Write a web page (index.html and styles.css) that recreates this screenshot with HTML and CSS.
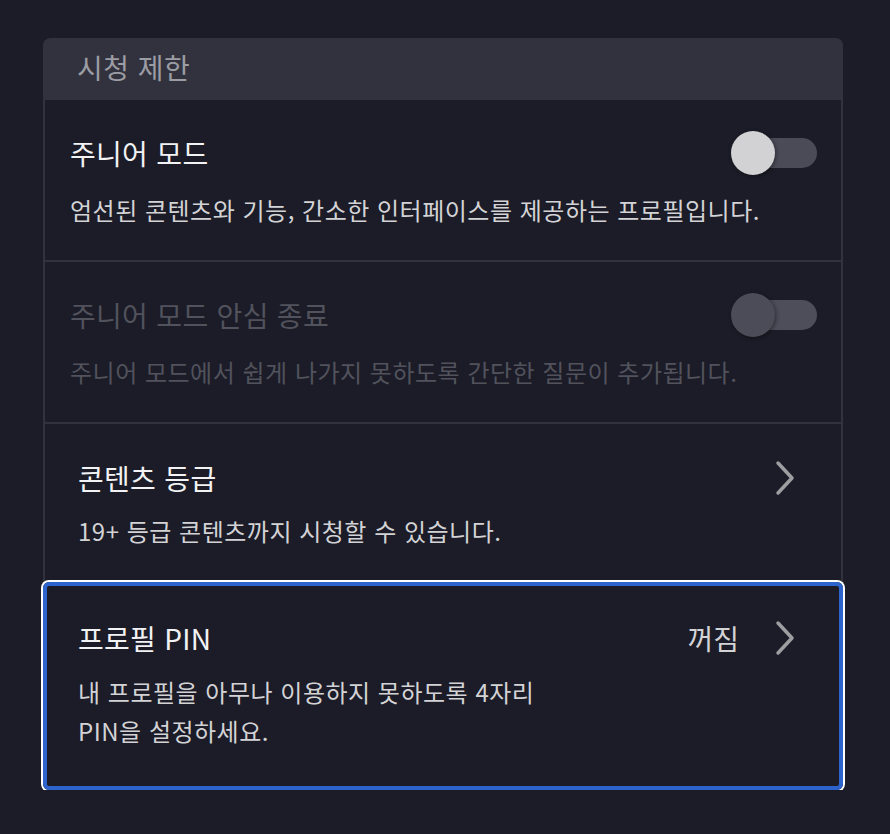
FILE: index.html
```html
<!DOCTYPE html>
<html lang="ko">
<head>
    <meta charset="UTF-8">
    <meta name="viewport" content="width=device-width, initial-scale=1.0">
    <title>시청 제한</title>
    <link rel="stylesheet" href="styles.css">
</head>
<body>
    <section class="panel">
        <div class="panel-header">시청 제한</div>

        <div class="row toggle-row">
            <div class="row-main">
                <div class="row-title">주니어 모드</div>
                <span class="switch"><span class="switch-track"></span><span class="switch-knob"></span></span>
            </div>
            <div class="row-desc">엄선된 콘텐츠와 기능, 간소한 인터페이스를 제공하는 프로필입니다.</div>
        </div>

        <div class="row toggle-row disabled">
            <div class="row-main">
                <div class="row-title">주니어 모드 안심 종료</div>
                <span class="switch"><span class="switch-track"></span><span class="switch-knob"></span></span>
            </div>
            <div class="row-desc">주니어 모드에서 쉽게 나가지 못하도록 간단한 질문이 추가됩니다.</div>
        </div>

        <div class="row link-row">
            <div class="row-main">
                <div class="row-title">콘텐츠 등급</div>
                <svg class="chevron" width="20" height="36" viewBox="0 0 20 36"><path d="M3 3 L17 18 L3 33"/></svg>
            </div>
            <div class="row-desc">19+ 등급 콘텐츠까지 시청할 수 있습니다.</div>
        </div>

        <div class="row link-row focused">
            <div class="row-main">
                <div class="row-title">프로필 PIN</div>
                <div class="row-value">
                    <span>꺼짐</span>
                    <svg class="chevron" width="20" height="36" viewBox="0 0 20 36"><path d="M3 3 L17 18 L3 33"/></svg>
                </div>
            </div>
            <div class="row-desc">내 프로필을 아무나 이용하지 못하도록 4자리 PIN을 설정하세요.</div>
        </div>
    </section>
</body>
</html>
```

FILE: styles.css
```css
body {
    margin: 0;
    padding: 38px 0 0 43px;
    background: #1b1c27;
    font-family: "Noto Sans CJK KR", "Noto Sans", sans-serif;
    color: #f2f2f4;
}

.panel {
    width: 796px;
    border: 2px solid #31323d;
    border-top: none;
    border-bottom: none;
    border-radius: 8px;
    background: #1b1c27;
}

.panel-header {
    height: 62px;
    margin: 0 -2px;
    padding: 0 0 4px 34px;
    box-sizing: border-box;
    display: flex;
    align-items: center;
    background: #31323d;
    border-radius: 8px 8px 0 0;
    color: #9b9ca4;
    font-size: 28px;
    letter-spacing: 0.5px;
}

.row {
    display: flex;
    flex-direction: column;
}

.row-main {
    display: flex;
    align-items: center;
    justify-content: space-between;
    height: 36px;
}

.row-title {
    font-size: 28px;
    line-height: 36px;
    letter-spacing: 0.3px;
}

.row-desc {
    font-size: 24px;
    line-height: 36px;
    letter-spacing: 0.5px;
    color: #d3d3d6;
}

.toggle-row {
    padding: 35px 24px 32px 25px;
    border-bottom: 2px solid #31323d;
}

.toggle-row .row-desc {
    margin-top: 21px;
}

.link-row {
    padding: 36px 46px 31px 33px;
}

.link-row .row-desc {
    margin-top: 17px;
}

.focused {
    margin: 2px -2px 0;
    padding: 34px 44px 36px 31px;
    border: 4px solid #2c63cd;
    border-radius: 6px;
    box-shadow: 0 0 0 2px #fff;
}

.focused .row-desc {
    margin-top: 16px;
    line-height: 39px;
    max-width: 480px;
}

.row-value {
    display: flex;
    align-items: center;
    gap: 36px;
    font-size: 28px;
    color: #d3d3d6;
}

.chevron path {
    fill: none;
    stroke: #9d9ea2;
    stroke-width: 3.5;
    stroke-linecap: round;
    stroke-linejoin: round;
}

/* switch: knob sits over the left end of the track */
.switch {
    position: relative;
    width: 86px;
    height: 46px;
}

.switch-track {
    position: absolute;
    left: 20px;
    right: 0;
    top: 8px;
    height: 30px;
    border-radius: 15px;
    background: #4a4b57;
}

.switch-knob {
    position: absolute;
    left: 0;
    top: 1px;
    width: 44px;
    height: 44px;
    border-radius: 50%;
    background: #d2d2d4;
    box-shadow: 1px 1px 4px rgba(0, 0, 0, 0.45);
}

.disabled .row-title,
.disabled .row-desc {
    color: #51525c;
}

.disabled .switch-track {
    background: #4d4e5a;
}

.disabled .switch-knob {
    background: #4b4c58;
}
```
